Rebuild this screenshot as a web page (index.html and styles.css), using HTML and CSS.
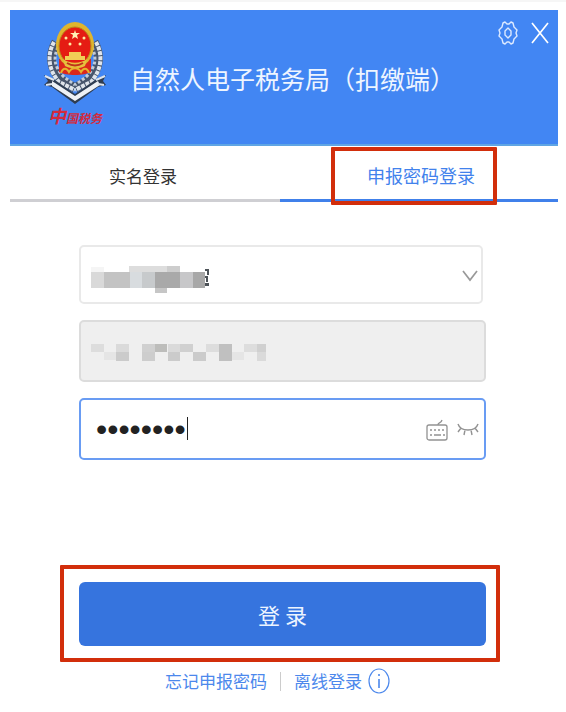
FILE: index.html
```html
<!DOCTYPE html>
<html lang="zh-CN">
<head>
  <meta charset="utf-8">
  <title>自然人电子税务局（扣缴端）</title>
  <link rel="stylesheet" href="styles.css">
</head>
<body>
  <div class="window">
    <header class="header">
      <svg class="logo" width="66" height="108" viewBox="0 0 66 108">
        <!-- silver wheat ears -->
        <g fill="none" stroke="#47556c" stroke-width="9">
          <path d="M12 21C5 34 6 48 17 59L31 67"/>
          <path d="M50 21C57 34 56 48 45 59L31 67"/>
        </g>
        <g fill="none" stroke="#dfe4eb" stroke-width="4" stroke-dasharray="4 1">
          <path d="M10 21C3 34 4 48 15 61L31 69"/>
          <path d="M52 21C59 34 58 48 47 61L31 69"/>
        </g>
        <g fill="none" stroke="#c3cbd7" stroke-width="3" stroke-dasharray="3 2">
          <path d="M14 26C9 37 10 46 20 56L31 64"/>
          <path d="M48 26C53 37 52 46 42 56L31 64"/>
        </g>
        <!-- ribbon -->
        <path d="M0 54l8 3 23 16 23-16 8-3-3 6 3 4-8 2-23 17L8 66l-8-2 4-4z" fill="#2f3d52"/>
        <path d="M8 60l23 15 23-15 2 4-25 16L8 65z" fill="#eef1f5"/>
        <path d="M1 55l9 4M2 64l6-1M61 55l-9 4M60 64l-6-1" stroke="#dfe5ee" stroke-width="2"/>
        <!-- emblem -->
        <path d="M15 38h32v13c-7 4-25 4-32 0z" fill="#dc271b"/>
        <ellipse cx="31" cy="24" rx="19" ry="23" fill="#dfb52e"/>
        <ellipse cx="31" cy="25" rx="16" ry="19" fill="#e51c13" stroke="#b98a1f" stroke-width="1"/>
        <path d="M31 9l1 3h4l-3 2 1 4-3-2-3 2 1-4-3-2h4z" fill="#fff2b5"/>
        <g fill="#ffeaa0">
          <circle cx="22" cy="17" r="1.5"/><circle cx="40" cy="17" r="1.5"/>
          <circle cx="26" cy="23" r="1.5"/><circle cx="36" cy="23" r="1.5"/>
        </g>
        <path d="M25 31h12v4h4v4H21v-4h4z" fill="#f1cf56"/>
        <path d="M19 38c7 5 17 5 24 0l-2 7c-5 3-15 3-20 0z" fill="#e6c13e"/>
        <path d="M23 42c5 3 11 3 16 0" stroke="#bd321b" stroke-width="2" fill="none"/>
        <path d="M17 52c2-6 6-5 8-1 3-5 9-5 12 0 2-4 6-5 8 1" fill="none" stroke="#e5b32d" stroke-width="2"/>
        <text class="logo-text" x="4" y="102"><tspan class="logo-text-first">中</tspan>国税务</text>
      </svg>
      <h1 class="title">自然人电子税务局（扣缴端）</h1>
      <div class="window-buttons">
        <button class="icon-button" type="button" aria-label="设置">
          <svg width="20" height="24" viewBox="0 0 20 24" fill="none" stroke="#dce9ff" stroke-width="1.4" stroke-linejoin="round">
            <path d="M5 2l2-1 2 2h2l2-2 2 1 1 4 3 3-1 3 1 3-3 3-1 4-2 1-2-2H9l-2 2-2-1-1-4-3-3 1-3-1-3 3-3z"/>
            <path d="M10 7l3 3v4l-3 3-3-3v-4z"/>
          </svg>
        </button>
        <button class="icon-button" type="button" aria-label="关闭">
          <svg width="18" height="22" viewBox="0 0 18 22" stroke="#fff" stroke-width="1.7">
            <path d="M1 1l16 20M17 1L1 21"/>
          </svg>
        </button>
      </div>
    </header>

    <nav class="tabs">
      <button class="tab" type="button">实名登录</button>
      <button class="tab active" type="button">申报密码登录<span class="tab-mark"></span></button>
    </nav>

    <form class="form">
      <div class="field company">
        <select class="control" aria-label="企业名称"><option></option></select>
        <svg class="mosaic" width="120" height="28" viewBox="0 0 120 28" shape-rendering="crispEdges">
          <path d="M0 2h13v5H0z" fill="#f5f5f5"/>
          <path d="M38 1h51v6H38z" fill="#dddddd"/>
          <path d="M0 7h13v16H0z" fill="#d9d9d9"/>
          <path d="M13 7h26v16H13z" fill="#c3c3c3"/>
          <path d="M39 7h12v16H39z" fill="#d8dcdf"/>
          <path d="M51 7h13v16H51z" fill="#c7cacc"/>
          <path d="M64 7h25v16H64z" fill="#a9a9a9"/>
          <path d="M64 23h12v5H64z" fill="#c6c6c6"/>
          <path d="M76 1h13v6H76z" fill="#cdcdcd"/>
          <path d="M89 7h13v16H89z" fill="#c7c7c9"/>
          <path d="M102 7h12v16h-12z" fill="#a8a8a8"/>
          <path d="M114 4h4v2h-4zM116 6h2v4h-2zM114 11h3v2h-3zM115 13h2v4h-2zM114 18h4v3h-4z" fill="#4d5358"/>
        </svg>
        <svg class="arrow" width="16" height="12" viewBox="0 0 16 12" fill="none" stroke="#999" stroke-width="1.7">
          <path d="M1 1l7 9 7-9"/>
        </svg>
      </div>

      <div class="field">
        <input class="control" type="text" aria-label="税号" disabled>
        <svg class="mosaic" width="176" height="18" viewBox="0 0 176 18" shape-rendering="crispEdges">
          <path d="M0 0h13v8H0zM115 0h13v8h-13zM153 0h13v8h-13z" fill="#dddddd"/>
          <path d="M13 8h12v8H13zM141 8h12v8h-12z" fill="#e5e5e5"/>
          <path d="M25 0h13v8H25zM77 0h12v8H77zM166 8h9v9h-9z" fill="#dadada"/>
          <path d="M25 8h13v9H25zM77 8h12v9H77zM102 8h13v9h-13z" fill="#cbcbcb"/>
          <path d="M51 0h13v8H51zM89 0h13v8H89zM166 0h9v8h-9z" fill="#d0d0d0"/>
          <path d="M51 8h13v9H51z" fill="#cdcdcd"/>
          <path d="M64 0h12v8H64z" fill="#bdbdbb"/>
          <path d="M128 0h13v17h-13z" fill="#c0c0c0"/>
        </svg>
      </div>

      <div class="field">
        <input class="control password" type="password" value="12345678" aria-label="申报密码">
        <span class="caret"></span>
        <div class="field-icons">
          <button class="icon-button" type="button" aria-label="软键盘">
            <svg width="22" height="22" viewBox="0 0 22 22" fill="none" stroke="#929292" stroke-width="1.3">
              <rect x="1" y="6" width="20" height="15" rx="2"/>
              <path d="M12 6c0-3 3-1 4-5"/>
              <path d="M4 11h14" stroke-dasharray="2 2"/>
              <path d="M4 16h2M8 16h7M17 16h2"/>
            </svg>
          </button>
          <button class="icon-button" type="button" aria-label="显示密码">
            <svg width="22" height="14" viewBox="0 0 22 14" fill="none" stroke="#929292" stroke-width="1.4">
              <path d="M1 1c1 3 3 6 10 6s9-3 10-6M4 5L1 9M8 7l-1 5M14 7l1 5M18 5l3 4"/>
            </svg>
          </button>
        </div>
      </div>

      <div class="submit-mark">
        <button class="submit" type="submit">登 录</button>
      </div>

      <div class="links">
        <a href="#">忘记申报密码</a>
        <span class="divider"></span>
        <a class="offline" href="#">离线登录
          <svg width="22" height="26" viewBox="0 0 22 26" fill="none" stroke="#4c88ec" stroke-width="1.2">
            <ellipse cx="11" cy="13" rx="10" ry="12"/>
            <path d="M11 11v9M11 6v2" stroke-width="1.6"/>
          </svg>
        </a>
      </div>
    </form>
  </div>
</body>
</html>
```
FILE: styles.css
```css
* {
  box-sizing: border-box;
}

body {
  margin: 0;
  border-top: 2px solid #f6f6f6;
  background: #fff;
  font-family: "Noto Sans CJK SC", sans-serif;
}

button {
  font-family: inherit;
  cursor: pointer;
}

.window {
  margin: 8px 8px 0 10px;
}

.header {
  display: flex;
  align-items: flex-start;
  height: 136px;
  padding: 11px 9px 0 34px;
  background: #4286f3;
  border-bottom: 2px solid #5fa5e4;
}

.logo {
  flex: none;
}

.logo-text {
  fill: #d32a3e;
  font-size: 12px;
  font-weight: bold;
  font-style: italic;
}

.logo-text-first {
  font-size: 18px;
}

.title {
  flex: 1;
  margin: 38px 0 0 20px;
  color: #eef5ff;
  font-size: 25px;
  font-weight: normal;
  line-height: 38px;
  white-space: nowrap;
}

.window-buttons {
  display: flex;
  align-items: center;
  gap: 13px;
}

.icon-button {
  display: flex;
  padding: 0;
  border: none;
  background: none;
}

.tabs {
  display: flex;
}

.tab {
  position: relative;
  width: 50%;
  height: 56px;
  padding: 5px 8px 0 0;
  border: none;
  border-bottom: 3px solid #cfcfd3;
  background: #fff;
  color: #333;
  font-size: 17px;
}

.tab:first-child {
  margin-right: -4px;
}

.tab.active {
  flex: 1;
  padding: 5px 0 0 4px;
  border-bottom-color: #4080ea;
  color: #4282ec;
  font-size: 18px;
}

.tab-mark {
  position: absolute;
  top: 1px;
  right: 61px;
  bottom: -6px;
  left: 51px;
  border: 4px solid #d22e0b;
  border-radius: 1px;
}

.form {
  display: flex;
  flex-direction: column;
  gap: 16px;
  padding: 43px 72px 0 69px;
}

.field {
  position: relative;
  height: 62px;
}

.company {
  height: 59px;
  margin-right: 3px;
}

.control {
  width: 100%;
  height: 100%;
  padding: 0 15px;
  border: 2px solid #e9e9e9;
  border-radius: 5px;
  background: #fff;
  appearance: none;
  outline: none;
}

.control:disabled {
  border-color: #dcdcdc;
  background: #efefef;
}

.control.password {
  padding-right: 70px;
  border-color: #699cf3;
  color: #222;
  font-family: "Liberation Sans", sans-serif;
  font-size: 32px;
}

.mosaic {
  position: absolute;
  top: 24px;
  left: 12px;
}

.company .mosaic {
  top: 20px;
}

.arrow {
  position: absolute;
  top: 25px;
  right: 5px;
}

.caret {
  position: absolute;
  top: 19px;
  left: 108px;
  width: 1px;
  height: 23px;
  background: #222;
}

.field-icons {
  position: absolute;
  top: 21px;
  right: 7px;
  display: flex;
  align-items: center;
  gap: 9px;
}

.submit-mark {
  margin: 89px -14px 0 -19px;
  padding: 13px 10px 12px 15px;
  border: 4px solid #d22e0b;
  border-radius: 1px;
}

.submit {
  width: 100%;
  height: 64px;
  border: none;
  border-radius: 6px;
  background: #3674de;
  color: #edf4ff;
  font-size: 22px;
}

.links {
  display: flex;
  align-items: center;
  justify-content: center;
  gap: 13px;
  margin-top: -10px;
  padding-right: 10px;
  font-size: 17px;
  line-height: 26px;
}

.links a {
  color: #4c88ec;
  text-decoration: none;
}

.links .offline {
  display: flex;
  gap: 6px;
}

.divider {
  width: 1px;
  height: 19px;
  background: #ccc;
}
```
